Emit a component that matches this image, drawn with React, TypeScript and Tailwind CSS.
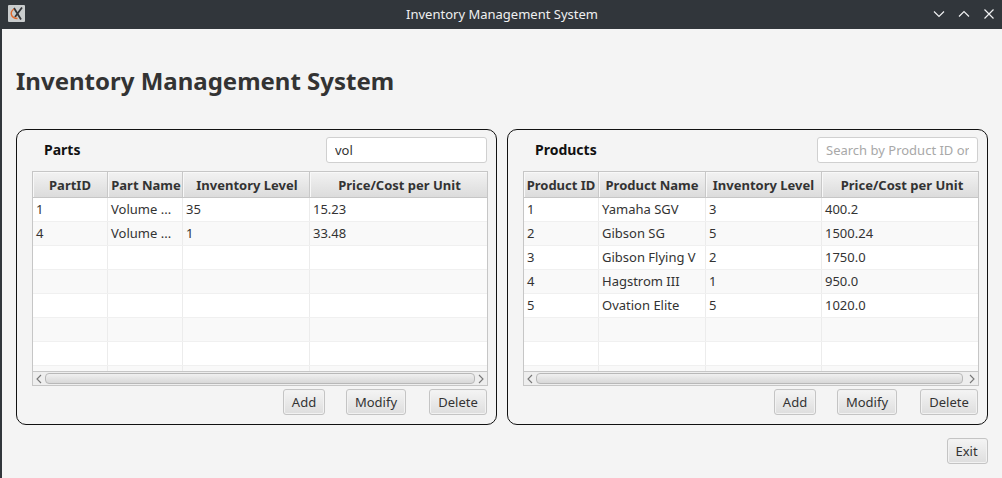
import React from "react";

type Col = { title: string; width: string; head?: string };

const partCols: Col[] = [
  { title: "PartID", width: "w-[75px]" },
  { title: "Part Name", width: "w-[75px]", head: "pl-[2px]" },
  { title: "Inventory Level", width: "w-[127px]", head: "pl-[2px]" },
  { title: "Price/Cost per Unit", width: "w-[177px]", head: "pl-[2px]" },
];
const productCols: Col[] = [
  { title: "Product ID", width: "w-[75px]" },
  { title: "Product Name", width: "w-[107px]" },
  { title: "Inventory Level", width: "w-[116px]" },
  { title: "Price/Cost per Unit", width: "w-[156px]", head: "pl-[4px]" },
];
const partRows = [
  ["1", "Volume ...", "35", "15.23"],
  ["4", "Volume ...", "1", "33.48"],
];
const productRows = [
  ["1", "Yamaha SGV", "3", "400.2"],
  ["2", "Gibson SG", "5", "1500.24"],
  ["3", "Gibson Flying V", "2", "1750.0"],
  ["4", "Hagstrom III", "1", "950.0"],
  ["5", "Ovation Elite", "5", "1020.0"],
];

function Btn({ label, w }: { label: string; w: string }) {
  return (
    <button className={`${w} h-[26px] rounded-[3px] border border-[#c4c4c4] bg-gradient-to-b from-[#f4f4f4] to-[#dedede] text-[13px] leading-none text-[#333333] shadow-[inset_0_0_0_1px_#f2f2f2]`}>
      {label}
    </button>
  );
}

function Table({ cols, rows, thumbGap }: { cols: Col[]; rows: string[][]; thumbGap: string }) {
  const empty = Array.from({ length: 8 - rows.length }, () => ["", "", "", ""]);
  const all = [...rows, ...empty];
  return (
    <div className="flex h-[215px] w-[456px] flex-col border border-[#c6c6c6] bg-white">
      <div className="flex h-[26px] shrink-0 border-b border-[#c6c6c6] bg-gradient-to-b from-[#f2f2f2] to-[#dcdcdc]">
        {cols.map((c) => (
          <div key={c.title} className={`${c.width} ${c.head ?? ""} flex items-center justify-center overflow-hidden whitespace-nowrap border-r border-[#c8c8c8] pt-[2px] text-[13px] font-bold text-[#333333] shadow-[inset_1px_1px_0_#f8f8f8] last:border-r-0`}>
            {c.title}
          </div>
        ))}
      </div>
      <div className="h-[173px] overflow-hidden">
        {all.map((r, i) => (
          <div key={i} className={`flex h-[24px] shrink-0 border-b border-[#f0f0f0] ${i % 2 ? "bg-[#f9f9f9]" : "bg-white"}`}>
            {cols.map((c, j) => (
              <div key={c.title} className={`${c.width} flex items-center overflow-hidden whitespace-nowrap border-r border-[#ececec] pl-[3px] text-[13px] text-[#333333] last:border-r-0`}>
                {r[j]}
              </div>
            ))}
          </div>
        ))}
      </div>
      <div className="flex h-[14px] shrink-0 items-center border-t border-[#c6c6c6] bg-[#eeeeee]">
        <svg width="12" height="12" viewBox="0 0 12 12" className="shrink-0"><path d="M8 2 L4 6 L8 10" fill="none" stroke="#777777" strokeWidth="1.1" /></svg>
        <div className={`h-[11px] flex-1 rounded-[4px] border border-[#b8b8b8] bg-gradient-to-b from-[#f0f0f0] to-[#d8d8d8] ${thumbGap}`} />
        <svg width="12" height="12" viewBox="0 0 12 12" className="shrink-0"><path d="M4 2 L8 6 L4 10" fill="none" stroke="#777777" strokeWidth="1.1" /></svg>
      </div>
    </div>
  );
}

function Panel({ title, input, placeholder, cols, rows, thumbGap }: { title: string; input?: string; placeholder?: string; cols: Col[]; rows: string[][]; thumbGap: string }) {
  return (
    <section className="flex h-[296px] w-[481px] flex-col rounded-[10px] border-[1.5px] border-[#111111] pl-[15px] pr-[8px]">
      <div className="flex h-[41px] shrink-0 items-center justify-between">
        <h2 className="mt-[-2px] pl-[12px] text-[14px] font-bold text-[#111111]">{title}</h2>
        <input
          readOnly
          value={input ?? ""}
          placeholder={placeholder}
          className="mr-[1px] mt-[-1px] h-[26px] w-[161px] rounded-[3px] border border-[#d0d0d0] bg-white px-[8px] text-[13px] text-[#333333] outline-none placeholder:text-[#a8a8a8]"
        />
      </div>
      <Table cols={cols} rows={rows} thumbGap={thumbGap} />
      <div className="mt-[3px] flex justify-end pr-[1px]">
        <Btn label="Add" w="w-[42px]" />
        <div className="w-[21px]" />
        <Btn label="Modify" w="w-[60px]" />
        <div className="w-[23px]" />
        <Btn label="Delete" w="w-[58px]" />
      </div>
    </section>
  );
}

export default function App() {
  return (
    <div className="flex h-[478px] w-[1002px] flex-col overflow-hidden bg-[#f4f4f4] font-['Noto_Sans',sans-serif]">
      <header className="relative flex h-[29px] shrink-0 items-center justify-center bg-[#31363b] pl-[2px] text-[13px] text-[#eff0f1]">
        <svg width="17" height="17" viewBox="0 0 17 17" className="absolute left-[8px] top-[5px]">
          <rect width="17" height="17" rx="1" fill="#c9cccd" />
          <path d="M6 3 L13 14.5 M14 2.5 L7 12" stroke="#33363a" strokeWidth="1.8" fill="none" />
          <path d="M6 4 C1.5 7 2.5 13 9.5 13.5" stroke="#e2692c" strokeWidth="1.4" fill="none" />
        </svg>
        Inventory Management System
        <div className="absolute right-[7px] top-[8px] flex gap-[13px]">
          <svg width="12" height="12" viewBox="0 0 12 12"><path d="M1 3.5 L6 8.5 L11 3.5" fill="none" stroke="#eff0f1" strokeWidth="1.2" /></svg>
          <svg width="12" height="12" viewBox="0 0 12 12"><path d="M1 8.5 L6 3.5 L11 8.5" fill="none" stroke="#eff0f1" strokeWidth="1.2" /></svg>
          <svg width="12" height="12" viewBox="0 0 12 12"><path d="M1.5 1.5 L10.5 10.5 M10.5 1.5 L1.5 10.5" fill="none" stroke="#eff0f1" strokeWidth="1.2" /></svg>
        </div>
      </header>
      <main className="flex flex-1 flex-col border-l-2 border-[#31363b] pl-[14px] pr-[14px]">
        <h1 className="mt-[32px] h-[40px] text-[24px] font-bold leading-[40px] text-[#333333]">Inventory Management System</h1>
        <div className="mt-[28px] flex gap-[10px]">
          <Panel title="Parts" input="vol" cols={partCols} rows={partRows} thumbGap="mr-0" />
          <Panel title="Products" placeholder="Search by Product ID or Name" cols={productCols} rows={productRows} thumbGap="mr-[3px]" />
        </div>
        <div className="mt-[13px] flex justify-end">
          <Btn label="Exit" w="w-[41px] pr-[2px]" />
        </div>
      </main>
    </div>
  );
}
